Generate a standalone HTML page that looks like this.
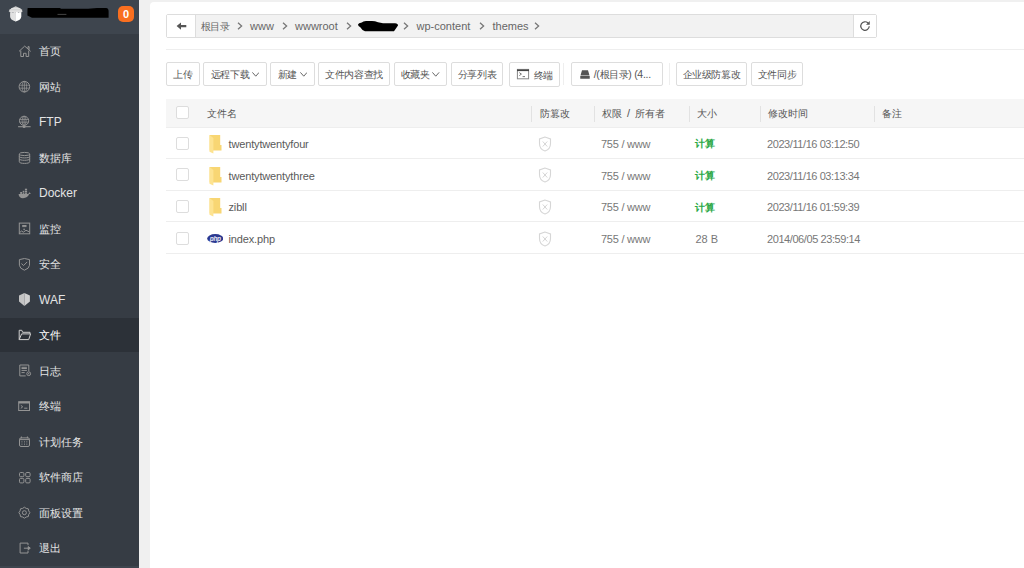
<!DOCTYPE html>
<html><head><meta charset="utf-8">
<style>
*{box-sizing:border-box;margin:0;padding:0}
html,body{width:1024px;height:568px;overflow:hidden;background:#f0f0f0;font-family:"Liberation Sans",sans-serif;}
.abs{position:absolute}
#side{position:absolute;left:0;top:0;width:139px;height:568px;background:#363c44}
#shead{position:absolute;left:0;top:0;width:139px;height:34px;background:#3e454e}
.mi{position:absolute;left:0;width:139px;height:35.5px;color:#e4e4e4;font-size:12px}
.mi .t{position:absolute;left:39px;top:1px;line-height:35.5px;white-space:nowrap}
.mi .t .z{font-size:11.2px}
#main{position:absolute;left:150px;top:2px;width:880px;height:570px;background:#fff;border-radius:4px 0 0 0}
#crumb{position:absolute;left:166px;top:14px;width:711px;height:24px;border:1px solid #ddd;border-radius:2px;background:#f2f2f2}
#hr1{position:absolute;left:166px;top:49px;width:860px;height:1px;background:#eee}
.z{font-size:10.3px}
.btn{position:absolute;top:62px;height:24px;border:1px solid #ddd;border-radius:2px;background:#fff;color:#555;font-size:11px;line-height:22px;text-align:center;white-space:nowrap}
.sep{position:absolute;top:63px;width:1px;height:22px;background:#eee}
#thead{position:absolute;left:166px;top:99px;width:860px;height:28.5px;background:#f6f6f6;border-bottom:1px solid #eee}
.th{position:absolute;top:99.1px;line-height:28px;font-size:11px;color:#555;white-space:nowrap}
.th .z{font-size:10.1px}
.btn .z{font-size:10px;letter-spacing:-0.4px}
.cr .z{font-size:10px;letter-spacing:-0.4px}
.vs{position:absolute;top:106px;width:1px;height:16px;background:#e2e2e2}
.row{position:absolute;left:166px;width:860px;border-bottom:1px solid #eee}
.cb{position:absolute;left:176.2px;width:13px;height:13px;border:1px solid #ddd;border-radius:2px;background:#fff}
.td{position:absolute;font-size:11px;color:#777;white-space:nowrap;line-height:14px}
.cr{position:absolute;top:19px;font-size:11px;line-height:14px;color:#666;white-space:nowrap}
.dd{display:inline-block;width:6px;height:6px;border-right:1px solid #666;border-bottom:1px solid #666;transform:rotate(45deg);vertical-align:3px;margin-left:1px}
</style></head><body>
<div id="side">
<div id="shead"></div>
<svg class="abs" style="left:0;top:0" width="30" height="30" viewBox="0 0 30 30"><path d="M8.7 11.3L10.2 9.2 13 7.6 15.7 6.3 18.5 7.6 21.3 9.2 22.7 11.3 21.3 12.4H10.1Z" fill="#cfcfcf"/><path d="M9.5 10.2H22M11 8.6H20.5M10 11.6H21.5" stroke="#eeeeee" stroke-width="0.7"/><path d="M10.1 12.6L11.6 11.9 13 12.7 14.4 11.7 15.7 12.5V21.4Q10.1 20 10.1 16.6Z" fill="#e2e2e2"/><path d="M15.4 12.5L17 11.7 18.5 12.7 20 11.9 21.3 12.6V16.6Q21.3 20 15.7 21.4H15.4Z" fill="#ffffff"/></svg>
<svg class="abs" style="left:0;top:0" width="139" height="34"><path d="M27.5 8.2Q27.5 7.9 28.5 7.9H60L61 8.7H88L97 7.9H106Q108.8 8.3 108.6 11.5V17.7H32L27.4 15.5Z" fill="#000"/><path d="M57.5 14.4H66.4" stroke="#555" stroke-width="0.8"/></svg>
<div class="abs" style="left:118px;top:6px;width:16px;height:16px;background:#f96f20;border-radius:5px;color:#fff;font-weight:bold;font-size:11px;line-height:17px;text-align:center">0</div>
<div class="abs" style="left:0;top:318px;width:139px;height:34px;background:#2c3138"></div>
<div class="abs" style="left:0;top:565.5px;width:139px;height:3px;background:#3e454e"></div>
<div class="mi" style="top:33.45px"><span class="t"><span class="z">首页</span></span></div>
<svg class="abs" style="left:16px;top:42px" width="18" height="18" viewBox="0 0 18 18" fill="none" stroke="#949494" stroke-width="1"><path d="M3 9.4L8.7 4.1 14.7 9.4M4.8 8.6V14.5H7.5V11.3H10.1V14.5H12.7V8.6M12 6.8V4.6H13.1V7.8"/></svg>
<div class="mi" style="top:68.95px"><span class="t"><span class="z">网站</span></span></div>
<svg class="abs" style="left:16px;top:78px" width="18" height="18" viewBox="0 0 18 18" fill="none" stroke="#949494" stroke-width="1"><circle cx="8.4" cy="8.7" r="5.3"/><g stroke-width="0.75"><ellipse cx="8.4" cy="8.7" rx="2.2" ry="5.3"/><path d="M8.4 3.4V14M3.5 7.2H13.3M3.5 10.2H13.3"/></g></svg>
<div class="mi" style="top:104.45px"><span class="t">FTP</span></div>
<svg class="abs" style="left:16px;top:113px" width="18" height="18" viewBox="0 0 18 18" fill="none" stroke="#949494" stroke-width="1"><circle cx="8.1" cy="7.8" r="4.6"/><g stroke-width="0.75"><ellipse cx="8.1" cy="7.8" rx="2" ry="4.6"/><path d="M8.1 3.3V12.3M3.6 6.5H12.6M3.6 9.2H12.6"/></g><path d="M2.1 13.7H14.6" stroke-width="1.1"/><rect x="6.9" y="12.5" width="2.4" height="2.4" fill="#949494" stroke="none"/></svg>
<div class="mi" style="top:139.95px"><span class="t"><span class="z">数据库</span></span></div>
<svg class="abs" style="left:16px;top:149px" width="18" height="18" viewBox="0 0 18 18" fill="none" stroke="#949494" stroke-width="1"><ellipse cx="8.5" cy="5" rx="5.2" ry="1.6"/><path d="M3.3 5V12.8C3.3 13.9 5.6 14.4 8.5 14.4S13.7 13.9 13.7 12.8V5M3.3 7.5C3.3 8.3 5.6 8.9 8.5 8.9S13.7 8.3 13.7 7.5M3.3 9.9C3.3 10.7 5.6 11.3 8.5 11.3S13.7 10.7 13.7 9.9"/></svg>
<div class="mi" style="top:175.45px"><span class="t">Docker</span></div>
<svg class="abs" style="left:16px;top:186px" width="18" height="18" viewBox="0 0 18 18" fill="none" stroke="#949494" stroke-width="1"><g fill="#949494" stroke="none"><path d="M2.6 8H12.3C12.6 7.3 13.1 6.6 13.5 6.3 14 6.9 14.3 7.3 14.9 7.6 14.3 8 13.7 8.1 13.1 8.1 12.3 10.6 10.2 12.2 7 12.2 4.2 12.2 2.7 10.6 2.6 8Z"/><rect x="4.2" y="6" width="1.9" height="1.9"/><rect x="6.7" y="4.8" width="1.6" height="1.4"/><rect x="6.7" y="6.5" width="1.6" height="1.4"/><rect x="8.9" y="2.7" width="2.2" height="1.6"/><rect x="8.9" y="4.7" width="2.2" height="1.5"/><rect x="8.9" y="6.5" width="2.2" height="1.4"/></g></svg>
<div class="mi" style="top:210.95px"><span class="t"><span class="z">监控</span></span></div>
<svg class="abs" style="left:16px;top:220px" width="18" height="18" viewBox="0 0 18 18" fill="none" stroke="#949494" stroke-width="1"><rect x="3.3" y="3.1" width="10.4" height="10.7"/><path d="M6.2 5.5H10.5M6.2 6.6H10.5M3.8 12.4L5.6 11 7.3 12.2 10 10.3 13.3 11.8"/><circle cx="8.1" cy="9.4" r="0.8" fill="#949494" stroke="none"/></svg>
<div class="mi" style="top:246.45px"><span class="t"><span class="z">安全</span></span></div>
<svg class="abs" style="left:16px;top:255px" width="18" height="18" viewBox="0 0 18 18" fill="none" stroke="#949494" stroke-width="1"><path d="M3.4 4.6Q8.4 2.4 13.5 4.6V10.3Q13.2 13.6 8.4 15.2 3.7 13.6 3.4 10.3Z"/><path d="M5.4 8.6L7.6 10.5 11.2 6.9"/></svg>
<div class="mi" style="top:281.95px"><span class="t">WAF</span></div>
<svg class="abs" style="left:16px;top:290px" width="18" height="18" viewBox="0 0 18 18" fill="none" stroke="#949494" stroke-width="1"><path fill="#c4c4c4" stroke="none" d="M8.4 3.1L3 5.5V11.6L8.4 15.9Z"/><path fill="#cfcfcf" stroke="none" d="M8.4 3.1L13.9 5.5V11.6L8.4 15.9Z"/></svg>
<div class="mi" style="top:317.45px;color:#fff"><span class="t"><span class="z">文件</span></span></div>
<svg class="abs" style="left:16px;top:326px" width="18" height="18" viewBox="0 0 18 18" fill="none" stroke="#cfcfcf" stroke-width="1"><path d="M3.2 13.6V4.3H5.8L6.6 6.3H14V7.9M3.2 13.6H12.7L14.6 7.9H5.6L3.2 13.6"/></svg>
<div class="mi" style="top:352.95px"><span class="t"><span class="z">日志</span></span></div>
<svg class="abs" style="left:16px;top:362px" width="18" height="18" viewBox="0 0 18 18" fill="none" stroke="#949494" stroke-width="1"><path d="M12.8 9V3H3.8V13.9H9.7M5.5 5.3H10.9M5.5 6.5H10.9M5.5 8.4H10.9M5.5 10.6H8.7"/><circle cx="12.7" cy="11.7" r="1.9"/><path d="M12.7 11V12.3" /></svg>
<div class="mi" style="top:388.45px"><span class="t"><span class="z">终端</span></span></div>
<svg class="abs" style="left:16px;top:398px" width="18" height="18" viewBox="0 0 18 18" fill="none" stroke="#949494" stroke-width="1"><rect x="2.7" y="3.7" width="10.8" height="8.8"/><path d="M2.7 4.6H13.5" stroke-width="1.8"/><path d="M4.8 7.3L6.7 8.8 4.8 10.4M8.2 10.2H11.4"/></svg>
<div class="mi" style="top:423.95px"><span class="t"><span class="z">计划任务</span></span></div>
<svg class="abs" style="left:16px;top:433px" width="18" height="18" viewBox="0 0 18 18" fill="none" stroke="#949494" stroke-width="1"><rect x="3.5" y="4.9" width="10" height="8.6" rx="1.5"/><path d="M5.4 3.5V5.3M11.4 3.5V5.3M3.6 6.6H13.4"/><g fill="#949494" stroke="none" opacity="0.8"><rect x="5.5" y="7.9" width="0.9" height="1"/><rect x="8" y="7.9" width="0.9" height="1"/><rect x="10.4" y="7.9" width="0.9" height="1"/><rect x="5.5" y="9.5" width="0.9" height="1"/><rect x="8" y="9.5" width="0.9" height="1"/><rect x="10.4" y="9.5" width="0.9" height="1"/><rect x="5.5" y="11.1" width="0.9" height="1"/><rect x="8" y="11.1" width="0.9" height="1"/><rect x="10.4" y="11.1" width="0.9" height="1"/></g></svg>
<div class="mi" style="top:459.45px"><span class="t"><span class="z">软件商店</span></span></div>
<svg class="abs" style="left:16px;top:468px" width="18" height="18" viewBox="0 0 18 18" fill="none" stroke="#949494" stroke-width="1"><rect x="3.5" y="4.5" width="4.4" height="4.2" rx="1.1"/><rect x="9.7" y="4.5" width="4.4" height="4.2" rx="1.1"/><rect x="3.5" y="10.4" width="4.4" height="4.5" rx="1.1"/><rect x="9.7" y="10.4" width="4.4" height="4.5" rx="1.1"/></svg>
<div class="mi" style="top:494.95px"><span class="t"><span class="z">面板设置</span></span></div>
<svg class="abs" style="left:16px;top:504px" width="18" height="18" viewBox="0 0 18 18" fill="none" stroke="#949494" stroke-width="1"><path d="M8.4 3.2L10.2 4.4 12.3 4.8 12.7 6.9 13.9 8.7 12.7 10.5 12.3 12.6 10.2 13 8.4 14.2 6.6 13 4.5 12.6 4.1 10.5 2.9 8.7 4.1 6.9 4.5 4.8 6.6 4.4Z"/><circle cx="8.4" cy="8.7" r="2"/></svg>
<div class="mi" style="top:530.45px"><span class="t"><span class="z">退出</span></span></div>
<svg class="abs" style="left:16px;top:539px" width="18" height="18" viewBox="0 0 18 18" fill="none" stroke="#949494" stroke-width="1"><path d="M12 6.2V4.1H4.1V14H12V11.6M7.9 9.2H13"/><path d="M12.2 7.6L14.3 9.2 12.2 10.8Z" fill="#949494" stroke-linejoin="round"/></svg>
</div>
<div id="main"></div>
<div id="crumb">
  <div class="abs" style="left:0;top:0;width:28.5px;height:22px;background:#fff;border-right:1px solid #ddd"></div>
  <svg class="abs" style="left:-1px;top:-1px" width="30" height="24" viewBox="166 14 30 24"><path d="M176.6 26.1L181 22.4V24.9H186.3V27.3H181V29.8Z" fill="#555"/></svg>
  <div class="abs" style="left:686px;top:0;width:23px;height:22px;background:#fff;border-left:1px solid #ddd"></div>
  <svg class="abs" style="left:691.5px;top:4.5px" width="12" height="12" viewBox="0 0 24 24"><path d="M20.5 12.5a8.5 8.5 0 1 1-2.5-6.5" fill="none" stroke="#555" stroke-width="2.4"/><path d="M21.5 2v7.5h-7.5z" fill="#555"/></svg>
</div>
<div class="cr" style="left:200.5px"><span class="z">根目录</span></div><svg class="abs" style="left:237px;top:22px" width="6" height="8" viewBox="0 0 6 8"><path d="M1 0.8L4.6 4 1 7.2" fill="none" stroke="#777" stroke-width="1.3"/></svg>
<div class="cr" style="left:250px">www</div><svg class="abs" style="left:281.5px;top:22px" width="6" height="8" viewBox="0 0 6 8"><path d="M1 0.8L4.6 4 1 7.2" fill="none" stroke="#777" stroke-width="1.3"/></svg>
<div class="cr" style="left:295px">wwwroot</div><svg class="abs" style="left:346px;top:22px" width="6" height="8" viewBox="0 0 6 8"><path d="M1 0.8L4.6 4 1 7.2" fill="none" stroke="#777" stroke-width="1.3"/></svg>
<svg class="abs" style="left:350px;top:14px" width="52" height="24" viewBox="350 14 52 24"><path d="M358 24.6Q358.4 23 361.8 22.6Q363 21 366 21H372Q375 21 378 22.2L383 23.3H395Q398.2 23.8 398 25.6L394 31.3H365Q362 30.2 360.3 27.2Q358 26.3 358 24.6Z" fill="#000"/></svg><svg class="abs" style="left:402.5px;top:22px" width="6" height="8" viewBox="0 0 6 8"><path d="M1 0.8L4.6 4 1 7.2" fill="none" stroke="#777" stroke-width="1.3"/></svg>
<div class="cr" style="left:416.5px">wp-content</div><svg class="abs" style="left:478.5px;top:22px" width="6" height="8" viewBox="0 0 6 8"><path d="M1 0.8L4.6 4 1 7.2" fill="none" stroke="#777" stroke-width="1.3"/></svg>
<div class="cr" style="left:492.5px">themes</div><svg class="abs" style="left:534px;top:22px" width="6" height="8" viewBox="0 0 6 8"><path d="M1 0.8L4.6 4 1 7.2" fill="none" stroke="#777" stroke-width="1.3"/></svg>
<div id="hr1"></div>
<div class="btn" style="left:166px;width:34px"><span class="z">上传</span></div>
<div class="btn" style="left:203px;width:64px"><span class="z">远程下载</span><svg style="margin-left:2.5px;vertical-align:1px" width="7.5" height="5" viewBox="0 0 7.5 5"><path d="M0.4 0.4L3.75 4.2 7.1 0.4" fill="none" stroke="#666" stroke-width="1"/></svg></div>
<div class="btn" style="left:270px;width:45px"><span class="z">新建</span><svg style="margin-left:2.5px;vertical-align:1px" width="7.5" height="5" viewBox="0 0 7.5 5"><path d="M0.4 0.4L3.75 4.2 7.1 0.4" fill="none" stroke="#666" stroke-width="1"/></svg></div>
<div class="btn" style="left:318px;width:72px"><span class="z">文件内容查找</span></div>
<div class="btn" style="left:393.5px;width:53.5px"><span class="z">收藏夹</span><svg style="margin-left:2.5px;vertical-align:1px" width="7.5" height="5" viewBox="0 0 7.5 5"><path d="M0.4 0.4L3.75 4.2 7.1 0.4" fill="none" stroke="#666" stroke-width="1"/></svg></div>
<div class="btn" style="left:451px;width:52px"><span class="z">分享列表</span></div>
<div class="btn" style="left:509px;width:51px;height:25px;padding-left:18px;padding-top:1px"><span class="z">终端</span><svg class="abs" style="left:-1px;top:-1px" width="51" height="25" viewBox="509 62 51 25"><rect x="517.4" y="69.4" width="11.2" height="9.4" fill="#fff" stroke="#888" stroke-width="1"/><path d="M517 70.3H529" stroke="#444" stroke-width="1.6"/><path d="M519.3 72.6L521.4 74.1 519.3 75.6M522.6 76.6H525" fill="none" stroke="#666" stroke-width="0.9"/></svg></div>
<div class="sep" style="left:563px"></div>
<div class="btn" style="left:571px;width:92px;padding-left:10.5px;font-size:10.5px;letter-spacing:-0.3px">/(<span class="z">根目录</span>) (4...<svg class="abs" style="left:7.5px;top:6.5px" width="10" height="9" viewBox="0 0 20 18"><path d="M4 0.5h12l3 10.5H1z" fill="#555"/><rect x="0.5" y="12" width="19" height="5.5" fill="#555"/></svg></div>
<div class="sep" style="left:669px"></div>
<div class="btn" style="left:676px;width:71px"><span class="z">企业级防篡改</span></div>
<div class="btn" style="left:751px;width:52px"><span class="z">文件同步</span></div>
<div id="thead"></div>
<div class="cb" style="top:106px"></div>
<div class="th" style="left:206.5px"><span class="z">文件名</span></div>
<div class="vs" style="left:531px"></div>
<div class="th" style="left:539.5px"><span class="z">防篡改</span></div>
<div class="vs" style="left:594px"></div>
<div class="th" style="left:602px;word-spacing:2px"><span class="z">权限</span>&nbsp;/&nbsp;<span class="z">所有者</span></div>
<div class="vs" style="left:689px"></div>
<div class="th" style="left:696.5px"><span class="z">大小</span></div>
<div class="vs" style="left:760px"></div>
<div class="th" style="left:768px"><span class="z">修改时间</span></div>
<div class="vs" style="left:874px"></div>
<div class="th" style="left:882px"><span class="z">备注</span></div>
<div class="row" style="top:127.5px;height:31.6px"></div>
<div class="cb" style="top:136.8px"></div>
<svg class="abs" style="left:208.6px;top:135.0px" width="13" height="19" viewBox="0 0 13 19"><path d="M0.6 0h10.6v10H12.5V15.6H0.6z" fill="#f8d673"/><path d="M0.5 0L4.4 3V18.5L0.5 16.7z" fill="#fde391"/></svg>
<div class="td" style="left:228.5px;top:136.9px;letter-spacing:-0.15px;color:#5a5a5a">twentytwentyfour</div>
<svg class="abs" style="left:538px;top:135.7px" width="14" height="16" viewBox="0 0 28 32"><path d="M14 2L3 6v9c0 7.5 5 13 11 15 6-2 11-7.5 11-15V6z" fill="none" stroke="#d6d6d6" stroke-width="2.2"/><path d="M9.5 11l9 10M18.5 11l-9 10" stroke="#d6d6d6" stroke-width="2"/></svg>
<div class="td" style="left:601px;top:137.1px;letter-spacing:-0.25px">755 / www</div>
<div class="td" style="color:#2aa845;font-weight:600;left:695px;top:136.3px"><span class="z">计算</span></div>
<div class="td" style="left:767px;top:137.1px;letter-spacing:-0.42px">2023/11/16 03:12:50</div>
<div class="row" style="top:159.1px;height:31.6px"></div>
<div class="cb" style="top:168.4px"></div>
<svg class="abs" style="left:208.6px;top:166.6px" width="13" height="19" viewBox="0 0 13 19"><path d="M0.6 0h10.6v10H12.5V15.6H0.6z" fill="#f8d673"/><path d="M0.5 0L4.4 3V18.5L0.5 16.7z" fill="#fde391"/></svg>
<div class="td" style="left:228.5px;top:168.5px;letter-spacing:-0.15px;color:#5a5a5a">twentytwentythree</div>
<svg class="abs" style="left:538px;top:167.3px" width="14" height="16" viewBox="0 0 28 32"><path d="M14 2L3 6v9c0 7.5 5 13 11 15 6-2 11-7.5 11-15V6z" fill="none" stroke="#d6d6d6" stroke-width="2.2"/><path d="M9.5 11l9 10M18.5 11l-9 10" stroke="#d6d6d6" stroke-width="2"/></svg>
<div class="td" style="left:601px;top:168.7px;letter-spacing:-0.25px">755 / www</div>
<div class="td" style="color:#2aa845;font-weight:600;left:695px;top:167.9px"><span class="z">计算</span></div>
<div class="td" style="left:767px;top:168.7px;letter-spacing:-0.42px">2023/11/16 03:13:34</div>
<div class="row" style="top:190.7px;height:31.6px"></div>
<div class="cb" style="top:200.0px"></div>
<svg class="abs" style="left:208.6px;top:198.2px" width="13" height="19" viewBox="0 0 13 19"><path d="M0.6 0h10.6v10H12.5V15.6H0.6z" fill="#f8d673"/><path d="M0.5 0L4.4 3V18.5L0.5 16.7z" fill="#fde391"/></svg>
<div class="td" style="left:228.5px;top:200.1px;letter-spacing:-0.15px;color:#5a5a5a">zibll</div>
<svg class="abs" style="left:538px;top:198.9px" width="14" height="16" viewBox="0 0 28 32"><path d="M14 2L3 6v9c0 7.5 5 13 11 15 6-2 11-7.5 11-15V6z" fill="none" stroke="#d6d6d6" stroke-width="2.2"/><path d="M9.5 11l9 10M18.5 11l-9 10" stroke="#d6d6d6" stroke-width="2"/></svg>
<div class="td" style="left:601px;top:200.3px;letter-spacing:-0.25px">755 / www</div>
<div class="td" style="color:#2aa845;font-weight:600;left:695px;top:199.5px"><span class="z">计算</span></div>
<div class="td" style="left:767px;top:200.3px;letter-spacing:-0.42px">2023/11/16 01:59:39</div>
<div class="row" style="top:222.3px;height:31.6px"></div>
<div class="cb" style="top:231.6px"></div>
<svg class="abs" style="left:206.5px;top:233.9px" width="16.5" height="9" viewBox="0 0 33 18"><ellipse cx="16.5" cy="9" rx="16.2" ry="8.8" fill="#2b3990"/><text x="16.5" y="13.5" text-anchor="middle" font-family="Liberation Sans" font-style="italic" font-weight="bold" font-size="13" letter-spacing="-0.5" fill="#e8eaf4">php</text></svg>
<div class="td" style="left:228.5px;top:231.7px;letter-spacing:-0.15px;color:#5a5a5a">index.php</div>
<svg class="abs" style="left:538px;top:230.5px" width="14" height="16" viewBox="0 0 28 32"><path d="M14 2L3 6v9c0 7.5 5 13 11 15 6-2 11-7.5 11-15V6z" fill="none" stroke="#d6d6d6" stroke-width="2.2"/><path d="M9.5 11l9 10M18.5 11l-9 10" stroke="#d6d6d6" stroke-width="2"/></svg>
<div class="td" style="left:601px;top:231.9px;letter-spacing:-0.25px">755 / www</div>
<div class="td" style="left:695.5px;top:231.9px">28 B</div>
<div class="td" style="left:767px;top:231.9px;letter-spacing:-0.42px">2014/06/05 23:59:14</div>
</body></html>
